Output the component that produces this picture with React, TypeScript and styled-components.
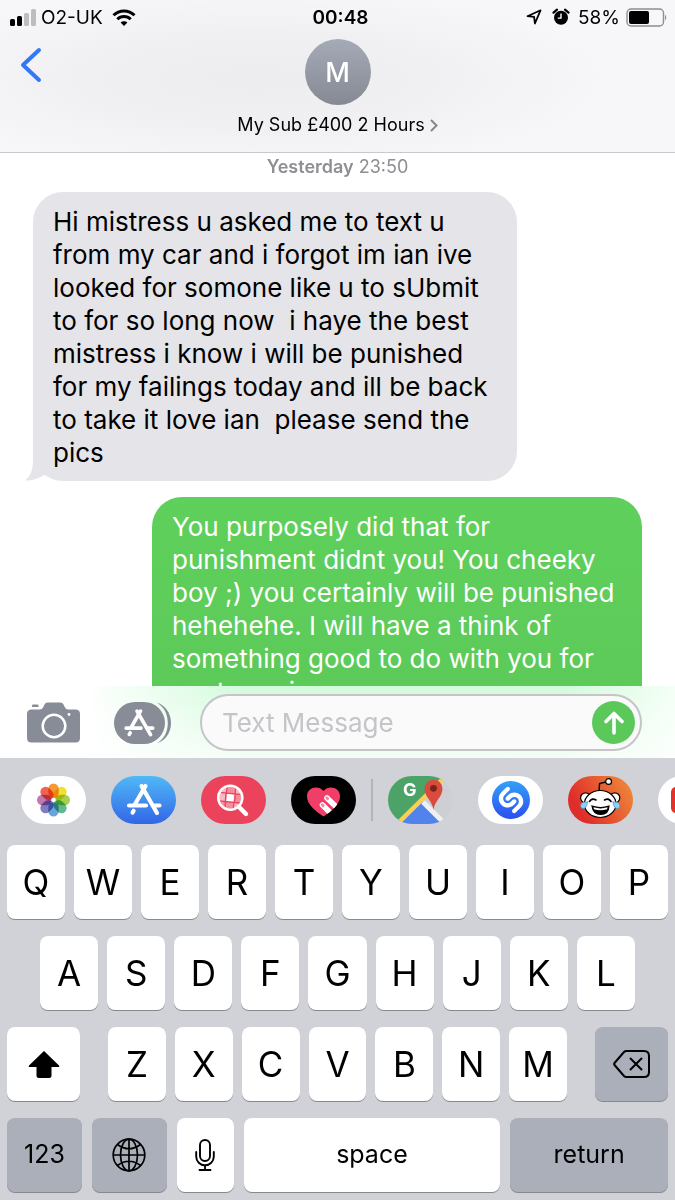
import { ReactNode } from 'react'
import styled, { createGlobalStyle, css } from 'styled-components'
import { SiShazam } from 'react-icons/si'

const GlobalStyle = createGlobalStyle`
  * { box-sizing: border-box; }
  body {
    margin: 0;
    background: #fff;
    color: #000;
    font-family: Inter, "Liberation Sans", sans-serif;
  }
  button, input { font: inherit; color: inherit; }
  button { border: 0; padding: 0; background: none; cursor: pointer; }
  svg { display: block; flex: none; }
`

const Screen = styled.main`
  display: flex;
  flex-direction: column;
  height: 100vh;
  overflow: hidden;
`

const Header = styled.header`
  flex: none;
  border-bottom: 1px solid #c9c9cc;
  background: radial-gradient(ellipse 52% 60% at 38% 52%, #ededef 0%, #f0f0f2 50%, #f7f7f9 100%);
`

const StatusBar = styled.div`
  display: grid;
  grid-template-columns: 1fr auto 1fr;
  align-items: center;
  height: 34px;
  padding: 0 9px;
  font-size: 19px;
`

const StatusGroup = styled.div<{ $end?: boolean }>`
  display: flex;
  align-items: center;
  justify-content: ${({ $end }) => ($end ? 'flex-end' : 'flex-start')};
  gap: ${({ $end }) => ($end ? '6px' : '5px')};
`

const EndGroup = styled(StatusGroup)`
  margin-right: -2px;
`

const Clock = styled.time`
  padding-left: 6px;
  font-size: 19px;
  font-weight: 600;
`

const NavBar = styled.nav`
  display: grid;
  grid-template-columns: 1fr auto 1fr;
  align-items: start;
  padding: 5px 20px 16px;
`

const BackButton = styled.button`
  justify-self: start;
  padding: 8px 0;
`

const Contact = styled.button`
  display: flex;
  flex-direction: column;
  align-items: center;
  gap: 9px;
`

const Avatar = styled.span`
  display: grid;
  place-items: center;
  width: 66px;
  height: 66px;
  border-radius: 50%;
  background: linear-gradient(#a5aab7, #858993);
  color: #fff;
  font-size: 27px;
  font-weight: 500;
`

const ContactName = styled.span`
  display: flex;
  align-items: center;
  gap: 5px;
  font-size: 18px;
  line-height: 22px;
`

const Thread = styled.section`
  flex: 1;
  min-height: 0;
  overflow: hidden;
  display: flex;
  flex-direction: column;
  padding: 3px 33px 0;
`

const DateLine = styled.p`
  flex: none;
  margin: 0 0 14px;
  text-align: center;
  font-size: 18px;
  line-height: 22px;
  color: #8e8e93;

  b { font-weight: 600; }
`

const Bubble = styled.p<{ $sent?: boolean }>`
  position: relative;
  flex: none;
  margin: 0 0 16px;
  padding: 13px 20px 12px;
  border-radius: 30px;
  font-size: 26px;
  line-height: 33px;
  white-space: pre-wrap;
  ${({ $sent }) =>
    $sent
      ? css`
          align-self: flex-end;
          max-width: 490px;
          background: linear-gradient(#5fd05c, #5cc958);
          color: #fff;
        `
      : css`
          align-self: flex-start;
          max-width: 484px;
          background: #e5e4e9;
        `}
`

const Tail = styled.svg`
  position: absolute;
  left: -8px;
  bottom: 0;
`

const Compose = styled.form`
  flex: none;
  display: flex;
  align-items: center;
  height: 72px;
  padding: 1px 33px 0 27px;
  background:
    linear-gradient(rgba(255, 255, 255, 0) 0%, rgba(255, 255, 255, 0.75) 100%),
    linear-gradient(90deg, #fff 13%, #d2fbdb 36%, #d2fbdb 84%, #f4fff6 100%);
`

const ToolButton = styled.button`
  margin-right: 34px;

  & + & { margin-right: 29px; }
`

const Field = styled.div`
  flex: 1;
  display: flex;
  align-items: center;
  min-width: 0;
  height: 57px;
  padding: 0 5px 0 20px;
  border: 2px solid #c5c5c9;
  border-radius: 29px;
  background: #fafafa;
`

const MessageInput = styled.input`
  flex: 1;
  min-width: 0;
  padding: 0;
  border: 0;
  outline: 0;
  background: none;
  font-size: 26px;

  &::placeholder { color: #c4c4c9; opacity: 1; }
`

const SendButton = styled.button`
  display: grid;
  place-items: center;
  width: 43px;
  height: 43px;
  border-radius: 50%;
  background: #5ac959;
`

const Keyboard = styled.section`
  flex: none;
  padding: 18px 0 8px;
  background: #d1d2d8;
`

const AppStrip = styled.div`
  display: flex;
  padding-left: 21px;
  margin-bottom: 21px;
  overflow: hidden;
`

const AppGroup = styled.div`
  flex: none;
  display: flex;
  gap: 25px;
`

const Divider = styled.span`
  flex: none;
  width: 2px;
  height: 42px;
  margin: 3px 15px;
  background: #b3b4ba;
`

const AppButton = styled.button<{ $bg: string }>`
  flex: none;
  display: grid;
  place-items: center;
  width: 65px;
  height: 48px;
  border-radius: 24px;
  overflow: hidden;
  background: ${({ $bg }) => $bg};
`

const Keys = styled.div`
  display: flex;
  flex-direction: column;
  gap: 17px;
`

const KeyRow = styled.div<{ $inset?: number; $gap?: number }>`
  display: flex;
  gap: ${({ $gap = 9 }) => $gap}px;
  padding: 0 ${({ $inset = 7 }) => $inset}px;
`

const LetterGroup = styled.div`
  flex: 1;
  display: flex;
  gap: 9px;
`

const Key = styled.button<{ $dark?: boolean; $grow?: number; $word?: boolean }>`
  flex: ${({ $grow = 58 }) => $grow} 1 0;
  display: grid;
  place-items: center;
  min-width: 0;
  height: 74px;
  padding-bottom: ${({ $word }) => ($word ? 3 : 0)}px;
  border-radius: 8px;
  background: ${({ $dark }) => ($dark ? '#abafba' : '#fff')};
  box-shadow: 0 1px 0 #88898d;
  font-size: ${({ $word }) => ($word ? 25 : 35)}px;
  line-height: 40px;
`

const SideKey = styled(Key)`
  flex: none;
  width: 73px;
`

const A_GLYPH = 'M34.5 10 23.5 29M30.5 10 46 37M18 29.5h17M42 29.5h6.5M22.6 34.8l-1 1.8'

const petals = ['#f58d1f', '#f0dc1c', '#9fcb3b', '#4db483', '#5a9bd5', '#7470bd', '#bb6aa6', '#ee5240']

function SignalIcon() {
  return (
    <svg width="27" height="17" viewBox="0 0 27 17">
      <rect x="1" y="10" width="5" height="7" rx="1.5" />
      <rect x="8" y="7" width="5" height="10" rx="1.5" />
      <rect x="15" y="4" width="5" height="13" rx="1.5" fill="#bdbdbf" />
      <rect x="22" y="0" width="5" height="17" rx="1.5" fill="#bdbdbf" />
    </svg>
  )
}

function WifiIcon() {
  return (
    <svg width="32" height="17" viewBox="-4 0 32 17" fill="none" stroke="#000" strokeWidth="3">
      <path d="M1.5 6.2a15 15 0 0 1 21 0" />
      <path d="M5.3 10.2a9.6 9.6 0 0 1 13.4 0" />
      <path d="M8.6 13.6a4.9 4.9 0 0 1 6.8 0L12 17z" fill="#000" stroke="none" />
    </svg>
  )
}

function LocationIcon() {
  return (
    <svg width="20" height="16" viewBox="0 0 20 16" fill="none" stroke="#000" strokeWidth="1.8" strokeLinejoin="round">
      <path d="M14.5 1.3 1.5 7.2l6.6.7.8 6.6z" />
    </svg>
  )
}

function AlarmIcon() {
  return (
    <svg width="20" height="18" viewBox="0 0 20 18" fill="none">
      <circle cx="9" cy="9.8" r="7" fill="#000" />
      <path d="M1.5 4.7 5 1.7M16.5 4.7 13 1.7" stroke="#000" strokeWidth="2.2" strokeLinecap="round" />
      <path d="M9 5.5v4.6H5.8" stroke="#fff" strokeWidth="1.4" />
    </svg>
  )
}

function BatteryIcon() {
  return (
    <svg width="42" height="19" viewBox="0 0 42 19">
      <rect x="1" y="1" width="36.5" height="17" rx="4" fill="none" stroke="#8f8f91" strokeWidth="1.4" />
      <rect x="3" y="3" width="20" height="13" rx="2" />
      <path d="M39 6.5q2.5 3 0 6z" fill="#8f8f91" />
    </svg>
  )
}

function CameraIcon() {
  return (
    <svg width="53" height="41" viewBox="0 0 53 41" fill="#878c97">
      <path d="M5 3.5q0-1 1-1h4.500q1 0 1 1V5H5z" />
      <path d="M4.500 7.500h8.500q2 0 3-2l1.500-3Q18.500.5 20.500.5h13q2 0 3 2l1.500 3q1 2 3 2h7.500q4.500 0 4.500 4.500v24q0 4.500-4.500 4.500h-44Q0 40.500 0 36V12q0-4.500 4.500-4.500z" />
      <circle cx="27" cy="24" r="11.300" fill="none" stroke="#fff" strokeWidth="2.500" />
      <circle cx="42" cy="12.500" r="1.400" fill="#fff" />
    </svg>
  )
}

function AppsIcon() {
  return (
    <svg width="57" height="42" viewBox="0 0 57 42">
      <rect width="51" height="42" rx="21" fill="#878c97" />
      <path d="M43 .8C51 3 57 11 57 21s-6 18-14 20.200C50 37 53.800 30 53.800 21S50 5 43 .8z" fill="#878c97" />
      <g transform="translate(-3.500 .5) scale(.87)">
        <path d={A_GLYPH} fill="none" stroke="#fff" strokeWidth="4.200" strokeLinecap="round" />
      </g>
    </svg>
  )
}

function PhotosArt() {
  return (
    <svg width="65" height="48" viewBox="0 0 65 48">
      <g transform="translate(32.500 24)">
        {petals.map((color, i) => (
          <rect
            key={color}
            x="-5.200"
            y="-16.500"
            width="10.400"
            height="14.500"
            rx="5.200"
            fill={color}
            opacity=".9"
            transform={`rotate(${i * 45})`}
            style={{ mixBlendMode: 'multiply' }}
          />
        ))}
      </g>
    </svg>
  )
}

function StoreArt() {
  return (
    <svg width="65" height="48" viewBox="0 0 65 48">
      <path d={A_GLYPH} fill="none" stroke="#fff" strokeWidth="4.200" strokeLinecap="round" />
    </svg>
  )
}

function SearchArt() {
  return (
    <svg width="65" height="48" viewBox="0 0 65 48">
      <clipPath id="lens"><circle cx="29.300" cy="21.700" r="11" /></clipPath>
      <g clipPath="url(#lens)" transform="rotate(6 29.300 21.700)">
        <path d="M17 9h25v25H17z" fill="#f58d9d" />
        <path d="M25.500 18h7.500v8h-7.500z" fill="#fff" />
        <path d="M17 10h8v7h-8zM33 10h8v7h-8zM33 26.500h8v7h-8zM17 18h8v8h-8z" fill="#f9b9c3" />
        <path d="M25.500 9q-2 12 0 25M33 9q2 12 0 25M17 17.500h25M17 26h25" stroke="#ec435c" strokeWidth="1.300" fill="none" />
      </g>
      <circle cx="29.300" cy="21.700" r="12" fill="none" stroke="#fff" strokeWidth="2.600" />
      <path d="m38 31 7 7" stroke="#fff" strokeWidth="4.400" strokeLinecap="round" />
    </svg>
  )
}

function HeartArt() {
  const heart = 'M32.500 40.500C25 35.500 16 28.500 16 20.500c0-9.500 11.500-11.500 16.500-5.500 5-6 16.500-4 16.500 5.500 0 8-9 15-16.500 20z'
  return (
    <svg width="65" height="48" viewBox="0 0 65 48">
      <clipPath id="heart"><path d={heart} /></clipPath>
      <path d={heart} fill="#f03e68" />
      <g clipPath="url(#heart)" strokeLinecap="round" stroke="#fff" strokeWidth="5.600">
        <path d="m36 22 14 13.500M31.500 29l13 13" />
        <path d="m35.800 21.800.8.8M31.300 28.800l.8.8" stroke="#f48ba3" strokeWidth="3" />
      </g>
    </svg>
  )
}

function MapsArt() {
  return (
    <svg width="65" height="48" viewBox="0 0 65 48">
      <path d="M0 0h58L10 48H0z" fill="#4ba367" />
      <path d="M12 48 34 25l22 23z" fill="#5283ec" />
      <path d="m35 26 20 20" stroke="#eff0f3" strokeWidth="5" />
      <path d="M9 48 57 1" stroke="#f9cf55" strokeWidth="4.500" />
      <path d="M45.500 34C44.500 25 36.500 21 36.500 12.500a9 9 0 0 1 18 0C54.500 21 46.500 25 45.500 34z" fill="#d84b3e" />
      <circle cx="45.500" cy="12.300" r="3.400" fill="#7b231d" />
      <text x="15" y="20" fontSize="18" fontWeight="700" fill="#fff">G</text>
    </svg>
  )
}

function ShazamArt() {
  return (
    <>
      <svg width="0" height="0" style={{ position: 'absolute' }}>
        <linearGradient id="shazam" x2="0" y2="1">
          <stop stopColor="#35a1f8" />
          <stop offset="1" stopColor="#2a4ff0" />
        </linearGradient>
      </svg>
      <SiShazam size={38} fill="url(#shazam)" />
    </>
  )
}

function RedditArt() {
  return (
    <svg width="65" height="48" viewBox="0 0 65 48" stroke="#000" strokeWidth="1.200" strokeLinecap="round">
      <path d="m31 15 .6-7.500 7-1.800" fill="none" strokeWidth="1.500" />
      <circle cx="40.600" cy="5.500" r="2.900" fill="#fff" />
      <circle cx="17.600" cy="21.800" r="5" fill="#fff" />
      <circle cx="46.800" cy="21.800" r="5" fill="#fff" />
      <ellipse cx="32.200" cy="28" rx="15.800" ry="13.500" fill="#fff" />
      <path d="M21.500 25.500q2.500-4 6.500-1.500M36.500 24q4-2.500 6.500 1.500" fill="none" strokeWidth="1.600" />
      <path d="M24 30q8.500 3 17 0-.5 8.500-8.200 8.500T24 30z" />
      <path d="M25.500 31.300q7 2.300 14 0l-.4 2q-6.500 1.800-13.200 0z" fill="#fff" stroke="none" />
      <path d="M19.500 26q-6.500-.5-7 4 1 3.500 4.300 2.200 2.700-2.200 2.700-6.200zM45 26q6.500-.5 7 4-1 3.500-4.300 2.200-2.700-2.200-2.700-6.200z" fill="#8fd0f4" stroke="#4a9ccc" strokeWidth=".8" />
    </svg>
  )
}

function VideoArt() {
  return (
    <svg width="65" height="48" viewBox="0 0 65 48">
      <rect x="13" y="11" width="39" height="26" rx="5" fill="#e8302a" />
      <path d="m29 18 10 6-10 6z" fill="#fff" />
    </svg>
  )
}

function ShiftIcon() {
  return (
    <svg width="32" height="27" viewBox="0 0 32 27">
      <path d="M16 0 31 14.500q1 1.500-1 1.500h-6.500v8.500q0 2.500-2.500 2.500H11q-2.500 0-2.500-2.500V16H2q-2 0-1-1.500z" />
    </svg>
  )
}

function DeleteIcon() {
  return (
    <svg width="37" height="28" viewBox="0 0 37 28" fill="none" stroke="#000" strokeWidth="2" strokeLinejoin="round" strokeLinecap="round">
      <path d="M13.500 1H31q5 0 5 5v16q0 5-5 5H13.500q-1.500 0-2.500-1L1.500 15q-.8-1 0-2L11 2q1-1 2.500-1z" />
      <path d="m17.500 8.500 11 11M28.500 8.500l-11 11" />
    </svg>
  )
}

function GlobeIcon() {
  return (
    <svg width="34" height="34" viewBox="0 0 34 34" fill="none" stroke="#000" strokeWidth="1.700">
      <circle cx="17" cy="17" r="15.800" />
      <ellipse cx="17" cy="17" rx="8.500" ry="15.800" />
      <path d="M17 1v32M1 17h32M5.500 6.500q11.500 8.500 23 0M5.500 27.500q11.500-8.500 23 0" />
    </svg>
  )
}

function MicIcon() {
  return (
    <svg width="20" height="32" viewBox="0 0 20 32" fill="none" stroke="#000" strokeWidth="1.900" strokeLinecap="round">
      <rect x="5" y="1" width="10" height="21" rx="5" />
      <path d="M1.200 13v4.500a8.800 8.800 0 0 0 17.600 0V13M10 26.500V31M4.500 31h11" />
    </svg>
  )
}

interface StripApp {
  name: string
  bg: string
  art: ReactNode
}

const ownApps: StripApp[] = [
  { name: 'Photos', bg: '#fff', art: <PhotosArt /> },
  { name: 'App Store', bg: 'linear-gradient(#50b9f7, #3266e6)', art: <StoreArt /> },
  { name: 'Image search', bg: '#ec435c', art: <SearchArt /> },
  { name: 'Digital Touch', bg: '#000', art: <HeartArt /> },
]

const otherApps: StripApp[] = [
  { name: 'Google Maps', bg: '#cecfd3', art: <MapsArt /> },
  { name: 'Shazam', bg: '#fff', art: <ShazamArt /> },
  { name: 'Reddit', bg: 'linear-gradient(60deg, #df2d2a 20%, #f0913b)', art: <RedditArt /> },
  { name: 'YouTube', bg: '#fff', art: <VideoArt /> },
]

function Apps({ items }: { items: StripApp[] }) {
  return (
    <AppGroup>
      {items.map(app => (
        <AppButton key={app.name} type="button" aria-label={app.name} $bg={app.bg}>
          {app.art}
        </AppButton>
      ))}
    </AppGroup>
  )
}

function Letters({ value }: { value: string }) {
  return (
    <>
      {value.split('').map(letter => (
        <Key key={letter} type="button">{letter}</Key>
      ))}
    </>
  )
}

export default function App() {
  return (
    <Screen>
      <GlobalStyle />
      <Header>
        <StatusBar>
          <StatusGroup>
            <SignalIcon />
            <span>O2-UK</span>
            <WifiIcon />
          </StatusGroup>
          <Clock>00:48</Clock>
          <EndGroup $end>
            <LocationIcon />
            <AlarmIcon />
            <span>58%</span>
            <BatteryIcon />
          </EndGroup>
        </StatusBar>
        <NavBar>
          <BackButton type="button" aria-label="Back">
            <svg width="22" height="36" viewBox="0 0 22 36" fill="none" stroke="#3478f6" strokeWidth="4" strokeLinecap="round" strokeLinejoin="round">
              <path d="M19 3 3 18l16 15" />
            </svg>
          </BackButton>
          <Contact type="button">
            <Avatar>M</Avatar>
            <ContactName>
              My Sub £400 2 Hours
              <svg width="8" height="13" viewBox="0 0 8 13" fill="none" stroke="#85858b" strokeWidth="2">
                <path d="m1 1 5.500 5.500L1 12" />
              </svg>
            </ContactName>
          </Contact>
        </NavBar>
      </Header>

      <Thread>
        <DateLine><b>Yesterday</b> 23:50</DateLine>
        <Bubble>
          {'Hi mistress u asked me to text u from my car and i forgot im ian ive looked for somone like u to sUbmit to for so long now  i haye the best mistress i know i will be punished for my failings today and ill be back to take it love ian  please send the pics'}
          <Tail width="26" height="30" viewBox="0 0 26 30">
            <path d="M8 0v10Q8 24 0 29.500q12 0 20-6L15 8z" fill="#e5e4e9" />
          </Tail>
        </Bubble>
        <Bubble $sent>
          You purposely did that for punishment didnt you! You cheeky boy ;) you certainly will be punished hehehehe. I will have a think of something good to do with you for next session x
        </Bubble>
      </Thread>

      <Compose onSubmit={e => e.preventDefault()}>
        <ToolButton type="button" aria-label="Camera"><CameraIcon /></ToolButton>
        <ToolButton type="button" aria-label="Apps"><AppsIcon /></ToolButton>
        <Field>
          <MessageInput aria-label="Text Message" placeholder="Text Message" />
          <SendButton type="submit" aria-label="Send">
            <svg width="20" height="24" viewBox="0 0 20 24" fill="none" stroke="#fff" strokeWidth="3.600" strokeLinecap="round" strokeLinejoin="round">
              <path d="M10 22V2.500M2 10.500l8-8 8 8" />
            </svg>
          </SendButton>
        </Field>
      </Compose>

      <Keyboard>
        <AppStrip>
          <Apps items={ownApps} />
          <Divider />
          <Apps items={otherApps} />
        </AppStrip>
        <Keys>
          <KeyRow>
            <Letters value="QWERTYUIOP" />
          </KeyRow>
          <KeyRow $inset={40}>
            <Letters value="ASDFGHJKL" />
          </KeyRow>
          <KeyRow $gap={28}>
            <SideKey type="button" aria-label="Shift"><ShiftIcon /></SideKey>
            <LetterGroup>
              <Letters value="ZXCVBNM" />
            </LetterGroup>
            <SideKey type="button" aria-label="Delete" $dark><DeleteIcon /></SideKey>
          </KeyRow>
          <KeyRow $gap={10}>
            <Key type="button" $dark $word $grow={75}>123</Key>
            <Key type="button" $dark $grow={75} aria-label="Next keyboard"><GlobeIcon /></Key>
            <Key type="button" $grow={57} aria-label="Dictate"><MicIcon /></Key>
            <Key type="button" $word $grow={257}>space</Key>
            <Key type="button" $dark $word $grow={158}>return</Key>
          </KeyRow>
        </Keys>
      </Keyboard>
    </Screen>
  )
}
